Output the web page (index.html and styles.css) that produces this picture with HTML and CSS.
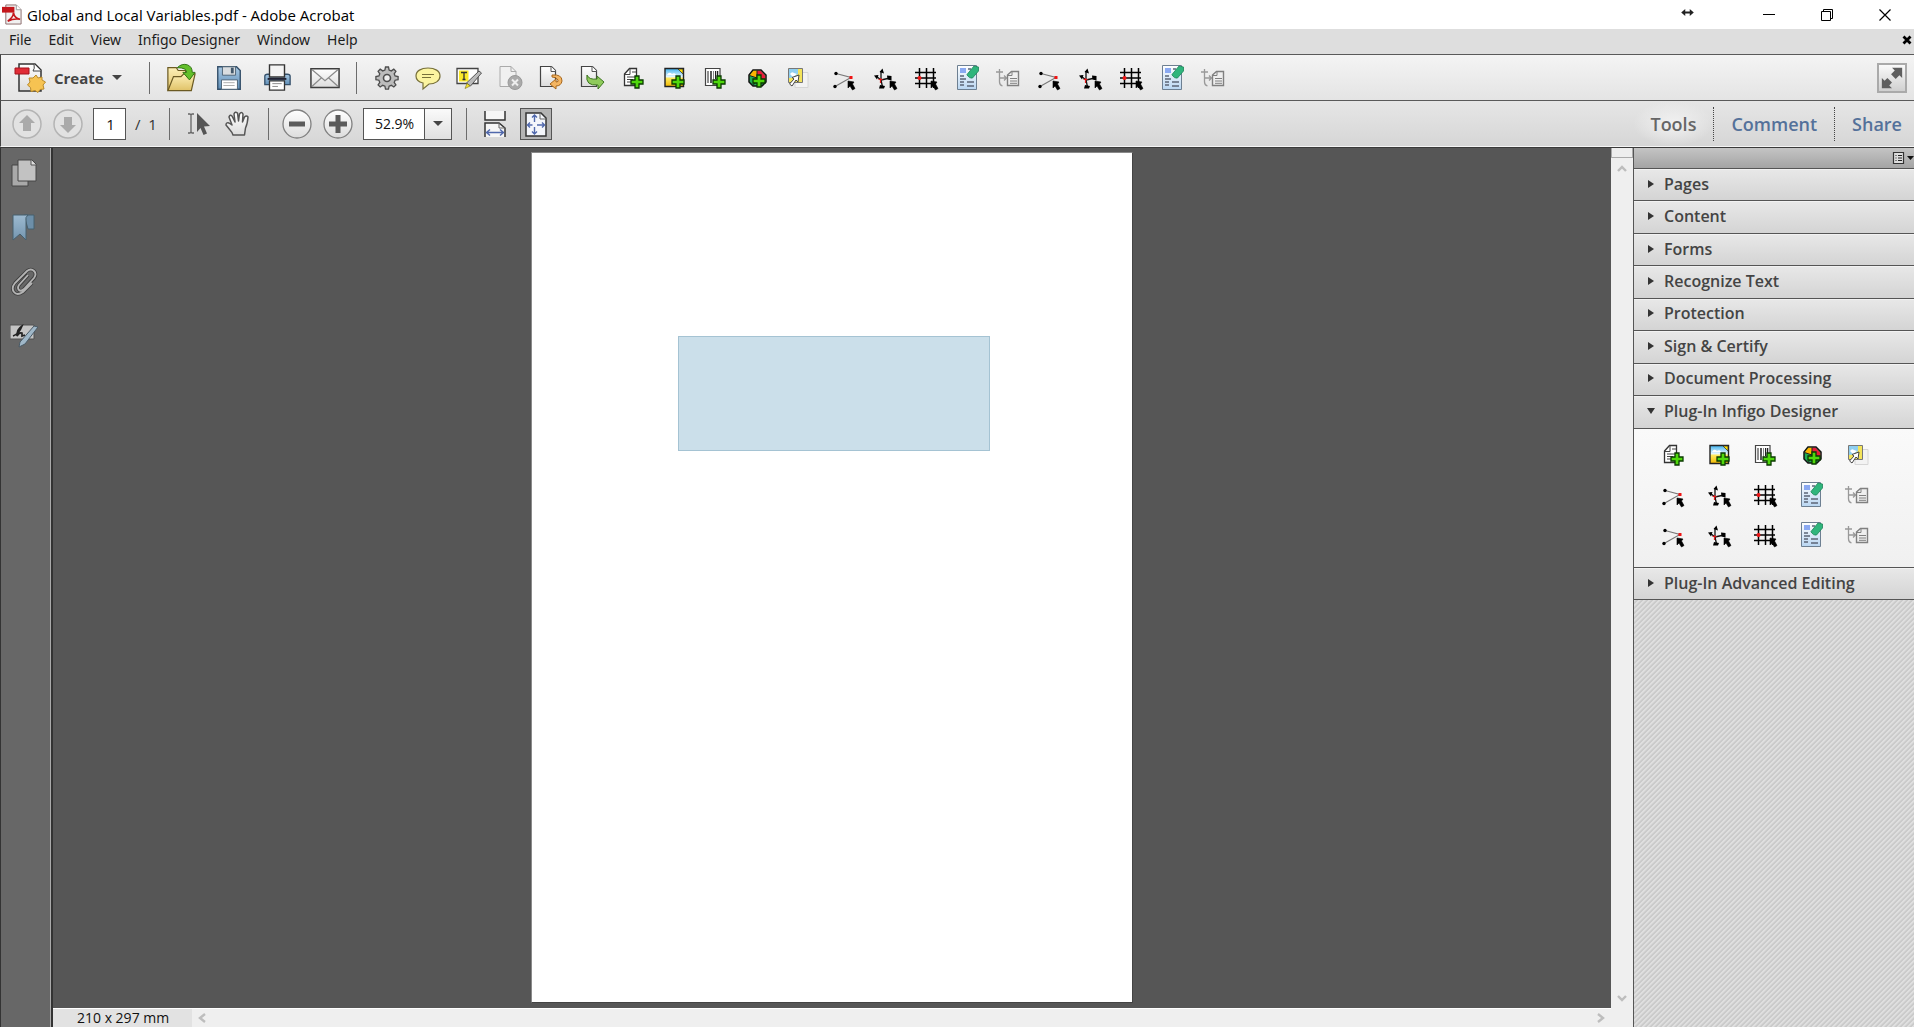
FILE: index.html
```html
<!DOCTYPE html>
<html lang="en">
<head>
<meta charset="utf-8">
<title>Global and Local Variables.pdf - Adobe Acrobat</title>
<link rel="stylesheet" href="styles.css">
</head>
<body>
<svg class="sprite" aria-hidden="true">
  <defs>
    <linearGradient id="g-paper" x1="0" y1="0" x2="0" y2="1"><stop offset="0" stop-color="#fff"/><stop offset="1" stop-color="#dcdcdc"/></linearGradient>
    <linearGradient id="g-folder" x1="0" y1="0" x2="0" y2="1"><stop offset="0" stop-color="#fdf0b8"/><stop offset="1" stop-color="#e0c267"/></linearGradient>
    <linearGradient id="g-blue" x1="0" y1="0" x2="0" y2="1"><stop offset="0" stop-color="#a9c9e4"/><stop offset="1" stop-color="#5f8fb8"/></linearGradient>
    <linearGradient id="g-form" x1="0" y1="0" x2="0" y2="1"><stop offset="0" stop-color="#fff"/><stop offset="1" stop-color="#b9d6f2"/></linearGradient>
    <linearGradient id="g-land" x1="0" y1="0" x2="0" y2="1"><stop offset="0" stop-color="#3fb2ee"/><stop offset=".45" stop-color="#e6f6ff"/><stop offset=".55" stop-color="#ffe95c"/><stop offset="1" stop-color="#f2b800"/></linearGradient>
    <linearGradient id="g-mark" x1="0" y1="0" x2="0" y2="1"><stop offset="0" stop-color="#9dbad0"/><stop offset="1" stop-color="#7496b0"/></linearGradient>
    <path id="plus" d="M-2-6h4v4h4v4h-4v4h-4v-4h-4v-4h4z" fill="#4fd80c" stroke="#0a3a00" stroke-width="1.3"/>
    <path id="cursor" d="M0 0l6 1-1.500 2 2.500 4.500-2.500 1.500-2.500-4-2 2z" fill="#000" stroke="#000" stroke-width=".6"/>
  </defs>
  <symbol id="i-text" viewBox="-1 -1 26 26">
    <path d="M3.500 8l5-5.500h7v17h-12z" fill="#fff" stroke="#333" stroke-width="1.300"/><path d="M4 8.500h5v-6" fill="none" stroke="#444"/>
    <path d="M11 6h4M6 11h9M6 13.500h6M6 16h6" stroke="#444" stroke-width="1.200"/><use href="#plus" x="16" y="16"/>
  </symbol>
  <symbol id="i-image" viewBox="-1 -1 26 26">
    <path d="M3 2.500h18.500v18H3z" fill="url(#g-land)" stroke="#222" stroke-width="1.400"/><path d="M5 9q2-4 5-1 3-2 4 1z" fill="#fff"/>
    <path d="M16 3h5v5z" fill="#ffe000" stroke="#333" stroke-width=".800"/><use href="#plus" x="16" y="16"/>
  </symbol>
  <symbol id="i-barcode" viewBox="-1 -1 26 26">
    <path d="M2.500 2.500h14.500v17H2.500z" fill="#fff" stroke="#444" stroke-width="1.200"/>
    <path d="M5 5v12M12.500 5v8" stroke="#222"/><path d="M8 5v12M14.500 5v8" stroke="#222" stroke-width="1.500"/><path d="M10.500 5v9" stroke="#888"/><use href="#plus" x="16" y="16"/>
  </symbol>
  <symbol id="i-color" viewBox="-1 -1 26 26">
    <path d="M9 4h8l5 5v7l-4 4h-9l-4-4V9z" fill="#1fae55" stroke="#111" stroke-width="1.500"/>
    <path d="M13 12V4.700H9.300L5.700 9.500z" fill="#ffb400"/><path d="M13 12V4.700h3.700l4.600 5V14z" fill="#e81c3c"/>
    <path d="M13 4.500V12L5.500 9.500M13 12l8.500 2M13 12l-4 8" fill="none" stroke="#222"/>
    <use href="#plus" x="15" y="15"/>
  </symbol>
  <symbol id="i-pick" viewBox="-1 -1 26 26">
    <path d="M10 6.500h13v15H10z" fill="#f3f3f3" stroke="#d6d6d6"/><path d="M3.500 2.500h14v14h-14z" fill="#f4e45a" stroke="#777"/>
    <path d="M4 3h9v5q-4 4-9 4z" fill="#8fcff0"/><path d="M5 8q2-3 4-1l3 1-4 3z" fill="#fff"/>
    <path d="M14 9l-1 7-2-2-4 6-2.500-2 4.500-5-2-1.500z" fill="#fff" stroke="#444"/>
  </symbol>
  <symbol id="i-line" viewBox="-1 -1 26 26">
    <path d="M4 7.500l15 4-16 9" fill="none" stroke="#777" stroke-width="1.100"/><circle cx="4" cy="7.500" r="1.700"/><circle cx="3" cy="20.500" r="1.700"/><path d="M17.500 10h3v3h-3z" fill="#f01414"/><use href="#cursor" x="16" y="15"/>
  </symbol>
  <symbol id="i-axis" viewBox="-1 -1 26 26">
    <path d="M8 14V5M8 14l-5-4M8 14l9-2M8 14l1.500 7" fill="none" stroke="#111" stroke-width="1.300"/>
    <path d="M9.500 2.500l1.500 5-4.500-1.500zM1 9.500l4.500-.5-1.500 4.500zM14 9.500l4.500.5v4.500l-4-1zM7 19l5 1-1 2.500H6z"/><path d="M5.500 13.500h4M7.500 12v5" stroke="#e01a1a" stroke-width="1.200"/><use href="#cursor" x="17" y="15"/>
  </symbol>
  <symbol id="i-grid" viewBox="-1 -1 26 26">
    <path d="M5.500 2v20M12.500 2v20M19.500 2v20M1 6.500h21M1 12h21M1 17.500h21" stroke="#000" stroke-width="1.500"/><circle cx="5.500" cy="12" r="2" fill="#f01414"/><use href="#cursor" x="17" y="15"/>
  </symbol>
  <symbol id="i-form" viewBox="-1 -1 26 26">
    <path d="M2.500 -.5h19v24h-19z" fill="url(#g-form)" stroke="#6d7f91"/><path d="M5 2h6v5H5z" fill="#8aa9f2"/>
    <path d="M5 10h4M5 13h6M5 16h4M12 16h7M5 19h4M12 20h7M13 3h3" stroke="#5c6677" stroke-width="1.500"/>
    <path d="M12 8.500l7-8.500 4.500 1v4l-6 7q-3 1-5.500-3z" fill="#2fb57c" stroke="#1c8458" stroke-width=".800"/>
  </symbol>
  <symbol id="i-tree" viewBox="-1 -1 26 26">
    <path d="M0 6h7M3.500 3v13q0 3 3 4M4 12h6M8 9.500l2.500 2.500L8 14.500" fill="none" stroke="#999" stroke-width="1.300"/>
    <path d="M11.500 9l4-3.500h7v14h-11z" fill="#efefef" stroke="#808080" stroke-width="1.400"/><path d="M12 9.500h4V6M14 12.500h7M14 15h7M14 17.300h7" fill="none" stroke="#808080"/>
  </symbol>
  <symbol id="i-gear" viewBox="-1 -1 26 26">
    <path d="M10.500 1h3l.6 3 2.200.9 2.500-1.700 2.100 2.100-1.700 2.500.9 2.200 3 .6v3l-3 .6-.9 2.200 1.700 2.500-2.100 2.100-2.500-1.700-2.200.9-.6 3h-3l-.6-3-2.200-.9-2.500 1.700-2.100-2.100 1.700-2.500-.9-2.200-3-.6v-3l3-.6.9-2.200-1.700-2.500 2.100-2.100 2.500 1.700 2.200-.9z" fill="#bcbcbc" stroke="#4d4d4d" stroke-width="1.300"/><circle cx="12" cy="12" r="3.500" fill="#eee" stroke="#4d4d4d" stroke-width="1.600"/>
  </symbol>
  <symbol id="i-note" viewBox="-1 -1 26 26">
    <path d="M12 2c7 0 12 3 12 8s-5 8-11 8l-6 5v-6c-4-1-7-3-7-7 0-5 5-8 12-8z" fill="#fbf4a0" stroke="#77703a" stroke-width="1.200"/><path d="M6 8.500h12M6 11.500h9" stroke="#77703a" stroke-width="1.200"/>
  </symbol>
  <symbol id="i-high" viewBox="-1 -1 26 26">
    <path d="M0 2.500h21v15H0z" fill="#fff" stroke="#444" stroke-width="1.300"/><path d="M2 4.500h9.500v11H2z" fill="#fbe92a"/><path d="M4 6.500h6M7 6.500v7M5.500 13.500h3" stroke="#333" stroke-width="1.300" fill="none"/>
    <path d="M22 5l2.500 2-11 13-4-3z" fill="#bbb" stroke="#555"/><path d="M10 17.500l3 2.500-5 2.500z" fill="#fbe92a" stroke="#8a7c20" stroke-width=".700"/>
  </symbol>
  <symbol id="i-del" viewBox="-1 -1 26 26">
    <path d="M2 .500h11l5 5v15H2z" fill="#f0f0f0" stroke="#aaa"/><path d="M13 .500v5h5" fill="none" stroke="#aaa"/><circle cx="17" cy="16.500" r="7" fill="#aaa" stroke="#999"/><path d="M14 13.500l6 6M20 13.500l-6 6" stroke="#eee" stroke-width="2"/>
  </symbol>
  <symbol id="i-rot" viewBox="-1 -1 26 26">
    <path d="M1.500 .500h11l4 4v16h-15z" fill="url(#g-paper)" stroke="#444" stroke-width="1.200"/><path d="M12 .500v5h5" fill="#fff" stroke="#555"/><path d="M13 9q10-1 10 6-1 5-6 5v3l-6-5 6-5v3q3 0 2-2-1-3-6-3z" fill="#f4b562" stroke="#a8661a"/>
  </symbol>
  <symbol id="i-exp" viewBox="-1 -1 26 26">
    <path d="M1.500 .500h11l4 4v16h-15z" fill="url(#g-paper)" stroke="#444" stroke-width="1.200"/><path d="M12 .500v5h5" fill="#fff" stroke="#555"/><path d="M7 9q2 5 10 4v-3l7 6-6 7v-4Q5 20 7 9z" fill="#8fcb5b" stroke="#3d7521"/>
  </symbol>
  <symbol id="i-create" viewBox="0 0 32 32">
    <path d="M5 2h16l6 6v21H5z" fill="url(#g-paper)" stroke="#333" stroke-width="1.500"/><path d="M20 2q1 5-1 7h8" fill="#fff" stroke="#444"/>
    <path d="M1 6h14v6H1z" fill="#e02c36" stroke="#a4121c"/><path d="M22 13l2 3 4-1 0 3 3.500 2-2.500 3 1 4-4 .5-2 3-3-2-4 1-.5-4-3-2.500 2.500-3-1-4 4 0z" fill="#f6c352" stroke="#b98a2a"/>
  </symbol>
  <symbol id="i-open" viewBox="0 0 32 32">
    <path d="M2 29V5h9l2 3h8v21z" fill="url(#g-folder)" stroke="#6b5a23" stroke-width="1.300"/><path d="M2 29.500l6-15h8l3-3h12l-4 18z" fill="url(#g-folder)" stroke="#6b5a23" stroke-width="1.300"/>
    <path d="M12 5q5-5 11-3 5 2 5 8h3l-6 8-7-8h4q0-5-10-5z" fill="#62bf2a" stroke="#2e7011"/>
  </symbol>
  <symbol id="i-save" viewBox="0 0 32 32">
    <path d="M4 4h20l4 4v20H4z" fill="url(#g-blue)" stroke="#35506a" stroke-width="1.500"/><path d="M9 4h14v9H9z" fill="#d9dde0" stroke="#4d6274"/><path d="M18 5h3v6h-3z" fill="#43586b"/><path d="M8 18h17v10H8z" fill="#fff" stroke="#4d6274"/><path d="M10 21h12M10 24h12" stroke="#aaa"/>
  </symbol>
  <symbol id="i-print" viewBox="0 0 32 32">
    <path d="M3 14q0-2 3-2h21q3 0 3 2v9H3z" fill="url(#g-blue)" stroke="#35506a" stroke-width="1.400"/><path d="M8 2h16v13H8z" fill="#f4f4f4" stroke="#333" stroke-width="1.500"/><path d="M6 17h20" stroke="#223" stroke-width="2"/><path d="M8 19h16v10H8z" fill="#fff" stroke="#333" stroke-width="1.400"/><path d="M11 22h10M11 25h6" stroke="#888"/>
  </symbol>
  <symbol id="i-mail" viewBox="0 0 32 32">
    <path d="M1 6h30v20H1z" fill="url(#g-paper)" stroke="#3e3e3e" stroke-width="1.600"/><path d="M2 7l14 12L30 7M2 25l10-9M30 25l-10-9" fill="none" stroke="#8a8a8a" stroke-width="1.300"/>
  </symbol>
  <symbol id="i-up" viewBox="0 0 32 32"><circle cx="16" cy="16" r="14" fill="#e2e2e2" stroke="#b4b4b4" stroke-width="1.500"/><path d="M16 7l8 8h-4v8h-8v-8H8z" fill="#aaa"/></symbol>
  <symbol id="i-down" viewBox="0 0 32 32"><circle cx="16" cy="16" r="14" fill="#e2e2e2" stroke="#b4b4b4" stroke-width="1.500"/><path d="M16 25l8-8h-4V9h-8v8H8z" fill="#aaa"/></symbol>
  <symbol id="i-minus" viewBox="0 0 32 32"><circle cx="16" cy="16" r="14" fill="url(#g-paper)" stroke="#808080" stroke-width="1.300"/><path d="M8 13.500h16v5H8z" fill="#5b5b5b"/></symbol>
  <symbol id="i-plus" viewBox="0 0 32 32"><circle cx="16" cy="16" r="14" fill="url(#g-paper)" stroke="#808080" stroke-width="1.300"/><path d="M13.500 7h5v6.500H25v5h-6.500V25h-5v-6.500H7v-5h6.500z" fill="#5b5b5b"/></symbol>
  <symbol id="i-select" viewBox="0 0 26 26"><path d="M1 3h2l1 1 1-1h2M1 22h2l1-1 1 1h2M4 4v17" fill="none" stroke="#666" stroke-width="1.300"/><path d="M10 2l13 13-6 .5 3 7-3.500 1.500-3-7-3.500 4z" fill="#555"/></symbol>
  <symbol id="i-hand" viewBox="0 0 26 26"><path d="M8 24q-1-3-3-5L1 14q0-3 3-2l3 2L4 6q1-3 3-1l3 6-1-8q1-3 3.500-1l1 8 1-7q2-3 3.500 0l-.5 8 2-5q2-2 3.500 0-.5 7-2.500 11l-1 7z" fill="url(#g-paper)" stroke="#555" stroke-width="1.500" stroke-linejoin="round"/></symbol>
  <symbol id="i-fitw" viewBox="0 0 26 26"><path d="M3 0v9h20V0" fill="#f6f6f6" stroke="#333" stroke-width="1.500"/><path d="M3 26V12h14l6 5v9" fill="#f6f6f6" stroke="#333" stroke-width="1.500"/><path d="M17 12v5h6" fill="none" stroke="#666"/><path d="M5 21.500h16M8 18.500l-3.500 3L8 24.500M18 18.500l3.500 3-3.500 3" fill="none" stroke="#5068ac" stroke-width="1.400"/></symbol>
  <symbol id="i-fitp" viewBox="0 0 26 26"><path d="M3 2h15l5 5v18H3z" fill="#f4f6fb" stroke="#333" stroke-width="1.500"/><path d="M17 2v6h6" fill="none" stroke="#666"/><path d="M11.500 4v7M9 6.500L11.500 4 14 6.500M11.500 16v7M9 20.500l2.500 2.500 2.500-2.500M4.500 14h5M7 11.500L4.500 14 7 16.500M14 14h7M19 11.500l2.500 2.500-2.500 2.500" fill="none" stroke="#5068ac" stroke-width="1.400"/></symbol>
  <symbol id="i-pages" viewBox="0 0 28 32"><path d="M2 8h16v21H2z" fill="#a9a9a9" stroke="#474747"/><path d="M8 3h14l4 4v17H8z" fill="#c2c2c2" stroke="#474747"/><path d="M21 3v5h5" fill="#ddd" stroke="#555"/></symbol>
  <symbol id="i-bookmark" viewBox="0 0 28 32"><path d="M14 4h10v14h-6z" fill="#6d8fa9" stroke="#46606f"/><path d="M3 4h15q-3 2-2 6v19l-6-6-7 6z" fill="url(#g-mark)" stroke="#46606f"/></symbol>
  <symbol id="i-clip" viewBox="0 0 28 32"><path d="M18 10l-9 10q-2 3 0 5t5-1l10-11q3-4 0-7t-7 0L5 18q-4 5-1 9t9 0l9-9" fill="none" stroke="#3f3f3f" stroke-width="3.600"/><path d="M18 10l-9 10q-2 3 0 5t5-1l10-11q3-4 0-7t-7 0L5 18q-4 5-1 9t9 0l9-9" fill="none" stroke="#b4b4b4" stroke-width="1.800"/></symbol>
  <symbol id="i-sign" viewBox="0 0 28 32"><path d="M0 6h24v14H0z" fill="#c4c4c4" stroke="#505050"/><path d="M3 17q6-2 9-10-5 3-5 10 2-4 5-3v3l3-1" fill="none" stroke="#222" stroke-width="1.700"/><path d="M24 7l4 1-13 17-6 3 1-5z" fill="#9fb7c8" stroke="#4a5a66"/></symbol>
  <symbol id="i-pdf" viewBox="0 0 22 22"><path d="M4 1h11l5 5v15H4z" fill="#f1f1f1" stroke="#8b6b6b"/><path d="M15 1v5h5" fill="#fff" stroke="#999"/><path d="M0 3h13v6H0z" fill="#c4161c"/><path d="M6 18q6-4 6-9 1 6 7 7-7-1-13 2z" fill="none" stroke="#c4161c" stroke-width="1.700"/></symbol>
</svg>

<div class="window">
  <header class="titlebar">
    <svg class="app-icon"><use href="#i-pdf"/></svg>
    <h1 class="title">Global and Local Variables.pdf - Adobe Acrobat</h1>
    <div class="window-controls">
      <svg class="drag-mark" viewBox="0 0 14 10"><path d="M0 5l4.500-4v3h5V1L14 5 9.500 9V6h-5v3z" fill="#222"/></svg>
      <button type="button" aria-label="Minimize"><svg viewBox="0 0 14 14"><path d="M1 6.500h12" stroke="#000"/></svg></button>
      <button type="button" aria-label="Restore"><svg viewBox="0 0 14 14"><path d="M1.500 3.500h9v9h-9zM3.500 3.500v-2h9v9h-2" fill="none" stroke="#000"/></svg></button>
      <button type="button" aria-label="Close"><svg viewBox="0 0 14 14"><path d="M1.500 1.500l11 11M12.500 1.500l-11 11" stroke="#000" stroke-width="1.200"/></svg></button>
    </div>
  </header>

  <nav class="menubar" aria-label="Menu">
    <button type="button">File</button>
    <button type="button">Edit</button>
    <button type="button">View</button>
    <button type="button">Infigo Designer</button>
    <button type="button">Window</button>
    <button type="button">Help</button>
    <button type="button" class="close-doc" aria-label="Close document"><svg viewBox="0 0 10 10"><path d="M1.500 1.500l7 7M8.500 1.500l-7 7" stroke="#000" stroke-width="2.800"/></svg></button>
  </nav>

  <div class="toolbar">
    <button type="button" class="create"><svg><use href="#i-create"/></svg>Create<span class="caret"></span></button>
    <span class="sep"></span>
    <div class="file-tools">
      <button type="button" aria-label="Open"><svg><use href="#i-open"/></svg></button>
      <button type="button" aria-label="Save"><svg><use href="#i-save"/></svg></button>
      <button type="button" aria-label="Print"><svg><use href="#i-print"/></svg></button>
      <button type="button" aria-label="Email"><svg><use href="#i-mail"/></svg></button>
    </div>
    <span class="sep"></span>
    <div class="quick-tools">
      <button type="button" aria-label="Preferences"><svg><use href="#i-gear"/></svg></button>
      <button type="button" aria-label="Sticky note"><svg><use href="#i-note"/></svg></button>
      <button type="button" aria-label="Highlight text"><svg><use href="#i-high"/></svg></button>
      <button type="button" aria-label="Delete pages" disabled><svg><use href="#i-del"/></svg></button>
      <button type="button" aria-label="Rotate pages"><svg><use href="#i-rot"/></svg></button>
      <button type="button" aria-label="Export"><svg><use href="#i-exp"/></svg></button>
      <button type="button" aria-label="Add text"><svg><use href="#i-text"/></svg></button>
      <button type="button" aria-label="Add image"><svg><use href="#i-image"/></svg></button>
      <button type="button" aria-label="Add barcode"><svg><use href="#i-barcode"/></svg></button>
      <button type="button" aria-label="Add graphic"><svg><use href="#i-color"/></svg></button>
      <button type="button" aria-label="Select field"><svg><use href="#i-pick"/></svg></button>
    </div>
    <div class="quick-tools">
      <button type="button" aria-label="Line path"><svg><use href="#i-line"/></svg></button>
      <button type="button" aria-label="Anchor"><svg><use href="#i-axis"/></svg></button>
      <button type="button" aria-label="Grid"><svg><use href="#i-grid"/></svg></button>
      <button type="button" aria-label="Form"><svg><use href="#i-form"/></svg></button>
      <button type="button" aria-label="Text flow" disabled><svg><use href="#i-tree"/></svg></button>
      <button type="button" aria-label="Line path 2"><svg><use href="#i-line"/></svg></button>
      <button type="button" aria-label="Anchor 2"><svg><use href="#i-axis"/></svg></button>
      <button type="button" aria-label="Grid 2"><svg><use href="#i-grid"/></svg></button>
      <button type="button" aria-label="Form 2"><svg><use href="#i-form"/></svg></button>
      <button type="button" aria-label="Text flow 2" disabled><svg><use href="#i-tree"/></svg></button>
    </div>
    <button type="button" class="expand" aria-label="Read mode"><svg viewBox="0 0 26 26"><path d="M24 2v11l-3-3-4 4-5-5 4-4-3-3zM2 24V13l3 3 3-3 5 5-3 3 3 3z" fill="#5f5f5f"/></svg></button>
  </div>

  <div class="navbar">
    <div class="page-nav">
      <button type="button" aria-label="Previous page" disabled><svg><use href="#i-up"/></svg></button>
      <button type="button" aria-label="Next page" disabled><svg><use href="#i-down"/></svg></button>
      <input class="page-input" aria-label="Page number" value="1">
      <span class="page-count">/&nbsp; 1</span>
    </div>
    <span class="sep"></span>
    <div class="cursor-tools">
      <button type="button" aria-label="Select tool"><svg><use href="#i-select"/></svg></button>
      <button type="button" aria-label="Hand tool"><svg><use href="#i-hand"/></svg></button>
    </div>
    <span class="sep"></span>
    <div class="zoom-tools">
      <button type="button" aria-label="Zoom out"><svg><use href="#i-minus"/></svg></button>
      <button type="button" aria-label="Zoom in"><svg><use href="#i-plus"/></svg></button>
      <div class="zoom-box"><input aria-label="Zoom level" value="52.9%"><button type="button" aria-label="Zoom presets"><span class="caret"></span></button></div>
    </div>
    <span class="sep"></span>
    <div class="fit-tools">
      <button type="button" aria-label="Fit width"><svg><use href="#i-fitw"/></svg></button>
      <button type="button" class="pressed" aria-label="Fit page"><svg><use href="#i-fitp"/></svg></button>
    </div>
    <div class="pane-tabs">
      <button type="button" class="active">Tools</button>
      <button type="button">Comment</button>
      <button type="button">Share</button>
    </div>
  </div>

  <main class="workspace">
    <nav class="rail" aria-label="Navigation panes">
      <button type="button" aria-label="Page thumbnails"><svg><use href="#i-pages"/></svg></button>
      <button type="button" aria-label="Bookmarks"><svg><use href="#i-bookmark"/></svg></button>
      <button type="button" aria-label="Attachments"><svg><use href="#i-clip"/></svg></button>
      <button type="button" aria-label="Signatures"><svg><use href="#i-sign"/></svg></button>
    </nav>

    <div class="viewer">
      <div class="canvas"><div class="sheet"><div class="field"></div></div></div>
      <div class="v-scroll">
        <span class="splitter"></span>
        <button type="button" aria-label="Scroll up"><svg viewBox="0 0 12 12"><path d="M2 9l4-4 4 4" fill="none" stroke="#bdbdbd" stroke-width="2.400"/></svg></button>
        <button type="button" class="end" aria-label="Scroll down"><svg viewBox="0 0 12 12"><path d="M2 4l4 4 4-4" fill="none" stroke="#bdbdbd" stroke-width="2.400"/></svg></button>
      </div>
      <div class="h-scroll">
        <span class="page-size">210 x 297 mm</span>
        <button type="button" aria-label="Scroll left"><svg viewBox="0 0 12 12"><path d="M9 2L4 6l5 4" fill="none" stroke="#bdbdbd" stroke-width="2.400"/></svg></button>
        <button type="button" class="end" aria-label="Scroll right"><svg viewBox="0 0 12 12"><path d="M3 2l5 4-5 4" fill="none" stroke="#bdbdbd" stroke-width="2.400"/></svg></button>
      </div>
    </div>

    <aside class="panel" aria-label="Tools">
      <div class="panel-top"><button type="button" aria-label="Panel options"><svg viewBox="0 0 22 14"><path d="M1.500 1.500h10v11h-10z" fill="#ddd" stroke="#333" stroke-width="1.200"/><path d="M3.500 4.500h1M6 4.500h4M3.500 7h1M6 7h4M3.500 9.500h1M6 9.500h4" stroke="#222"/><path d="M15 5h7l-3.500 4z" fill="#111"/></svg></button></div>
      <div class="sections">
        <button type="button" class="section">Pages</button>
        <button type="button" class="section">Content</button>
        <button type="button" class="section">Forms</button>
        <button type="button" class="section">Recognize Text</button>
        <button type="button" class="section">Protection</button>
        <button type="button" class="section">Sign &amp; Certify</button>
        <button type="button" class="section">Document Processing</button>
      </div>
      <button type="button" class="section open" aria-expanded="true">Plug-In Infigo Designer</button>
      <div class="tool-grid">
        <button type="button" aria-label="Add text"><svg><use href="#i-text"/></svg></button>
        <button type="button" aria-label="Add image"><svg><use href="#i-image"/></svg></button>
        <button type="button" aria-label="Add barcode"><svg><use href="#i-barcode"/></svg></button>
        <button type="button" aria-label="Add graphic"><svg><use href="#i-color"/></svg></button>
        <button type="button" aria-label="Select field"><svg><use href="#i-pick"/></svg></button>
        <button type="button" aria-label="Line path"><svg><use href="#i-line"/></svg></button>
        <button type="button" aria-label="Anchor"><svg><use href="#i-axis"/></svg></button>
        <button type="button" aria-label="Grid"><svg><use href="#i-grid"/></svg></button>
        <button type="button" aria-label="Form"><svg><use href="#i-form"/></svg></button>
        <button type="button" aria-label="Text flow" disabled><svg><use href="#i-tree"/></svg></button>
        <button type="button" aria-label="Line path 2"><svg><use href="#i-line"/></svg></button>
        <button type="button" aria-label="Anchor 2"><svg><use href="#i-axis"/></svg></button>
        <button type="button" aria-label="Grid 2"><svg><use href="#i-grid"/></svg></button>
        <button type="button" aria-label="Form 2"><svg><use href="#i-form"/></svg></button>
        <button type="button" aria-label="Text flow 2" disabled><svg><use href="#i-tree"/></svg></button>
      </div>
      <button type="button" class="section">Plug-In Advanced Editing</button>
      <div class="hatch"></div>
    </aside>
  </main>
</div>
</body>
</html>
```
FILE: styles.css
```css
* { box-sizing: border-box; }

body {
  margin: 0;
  font-family: "Open Sans", "Noto Sans", sans-serif;
  font-size: 14px;
  color: #111;
}

button, input { font: inherit; color: inherit; margin: 0; padding: 0; border: 0; border-radius: 0; }
button { background: none; display: flex; align-items: center; justify-content: center; white-space: nowrap; }
svg { display: block; flex: none; }
.sprite { position: absolute; width: 0; height: 0; }

.window { display: flex; flex-direction: column; height: 100vh; overflow: hidden; }

/* Title bar */
.titlebar { display: flex; align-items: center; height: 29px; padding-left: 2px; background: #fff; flex: none; }
.app-icon { width: 21px; height: 21px; margin-right: 4px; }
.title { margin: 0; font-size: 15px; font-weight: 400; line-height: 20px; color: #000; }
.window-controls { display: flex; align-items: center; margin-left: auto; }
.window-controls button { width: 58px; height: 28px; }
.window-controls button svg { width: 14px; height: 14px; }
.window-controls .drag-mark { width: 13px; height: 9px; margin: 0 46px 5px 0; }

/* Menu bar */
.menubar { display: flex; align-items: center; gap: 17px; height: 25px; padding: 0 2px 3px 9px; background: #dedede; flex: none; }
.menubar button { line-height: 20px; font-family: "Noto Sans", sans-serif; font-size: 14px; color: #1c1c1c; }
.menubar .close-doc { margin-left: auto; }
.close-doc svg { width: 10px; height: 10px; }

/* Toolbars */
.toolbar, .navbar {
  display: flex;
  align-items: center;
  height: 46px;
  border-top: 1px solid #5a5a5a;
  border-left: 1px solid #444;
  flex: none;
}
.toolbar { background: linear-gradient(#f4f4f4, #e4e4e4); }
.navbar { height: 47px; background: linear-gradient(#e6e6e6, #d6d6d6); border-bottom: 1px solid #f4f4f4; }
.sep { width: 1px; height: 32px; background: #6c6c6c; flex: none; }
.caret { border: 5px solid transparent; border-top-color: #444; border-bottom: 0; }

.create { margin: 0 27px 0 13px; gap: 8px; font-size: 15px; font-weight: 700; color: #444; }
.create svg { width: 32px; height: 32px; }
.file-tools { display: flex; margin: 0 7px; }
.file-tools button { width: 48px; height: 40px; }
.file-tools svg { width: 30px; height: 30px; }
.quick-tools { display: flex; }
.quick-tools button { width: 41px; height: 40px; }
.quick-tools svg, .tool-grid svg { width: 26px; height: 26px; }
.sep + .quick-tools { margin-left: 10px; }
.quick-tools + .quick-tools { margin-left: 6px; }
.expand { width: 30px; height: 30px; margin: 0 7px 0 auto; background: linear-gradient(#fafafa, #d0d0d0); border: 2px solid #aaa; }
.expand svg { width: 24px; height: 24px; }

.page-nav, .cursor-tools, .zoom-tools, .fit-tools { display: flex; align-items: center; }
.page-nav svg, .zoom-tools svg { width: 32px; height: 32px; }
.page-nav { gap: 9px; padding: 0 12px 0 10px; }
.page-input { width: 33px; height: 32px; border: 1px solid #555; background: #fff; padding-left: 2px; text-align: center; font-size: 15px; }
.page-count { font-size: 15px; color: #333; }
.cursor-tools { gap: 12px; padding: 0 17px; }
.cursor-tools svg, .fit-tools svg { width: 26px; height: 26px; }
.zoom-tools { gap: 9px; padding: 0 14px 0 12px; }
.zoom-box { display: flex; height: 32px; width: 89px; border: 1px solid #555; }
.zoom-box input { width: 61px; padding-left: 11px; border-right: 1px solid #555; background: #fff; font-size: 14px; }
.zoom-box button { flex: 1; background: linear-gradient(#fafafa, #e0e0e0); }
.fit-tools { gap: 12px; padding-left: 15px; }
.fit-tools .pressed { width: 32px; height: 32px; border: 1px solid #555; background: #b4b4b4; }

.pane-tabs { display: flex; align-items: center; margin-left: auto; align-self: stretch; font-size: 18px; font-weight: 600; color: #54719a; }
.pane-tabs button { height: 34px; padding: 0 17px; border-left: 1px dotted #444; }
.pane-tabs .active { align-self: stretch; height: auto; border-left: 0; color: #666; background: radial-gradient(closest-side, #f2f2f2, transparent); }
.pane-tabs button:last-child { padding-right: 12px; }

/* Workspace */
.workspace { flex: 1; min-height: 0; display: flex; background: #565656; border-top: 1px solid #3a3a3a; }
.rail {
  width: 53px;
  padding: 9px 0 0 7px;
  display: flex;
  flex-direction: column;
  gap: 22px;
  background: #676767;
  border-left: 1px solid #333;
  border-right: 2px solid #333;
  box-shadow: inset -1px 0 #aaa;
  flex: none;
}
.rail button { width: 32px; height: 32px; }
.rail svg { width: 28px; height: 32px; }

.viewer { flex: 1; min-width: 0; display: grid; grid-template: 1fr 19px / 1fr 22px; }
.canvas { display: flex; justify-content: center; padding: 4px 0 5px; min-height: 0; }
.sheet { position: relative; height: 100%; aspect-ratio: 210 / 297; background: #fff; border: 1px solid #999; border-color: #8a8a8a #444 #444 #8a8a8a; }
.field { position: absolute; left: 24.3%; top: 21.6%; width: 52%; height: 13.5%; background: #cbdfea; border: 1px solid #a5c3d3; }

.v-scroll { grid-row: 1 / 3; grid-column: 2; display: flex; flex-direction: column; align-items: center; background: #efefef; }
.splitter { width: 100%; height: 10px; border: 1px solid #aaa; border-top: 0; background: #eee; }
.v-scroll svg, .h-scroll svg { width: 12px; height: 12px; }
.v-scroll button { margin-top: 4px; }
.v-scroll .end { margin: auto 0 23px; }
.h-scroll { display: flex; align-items: center; background: #efefef; border-top: 1px solid #fff; }
.page-size { width: 139px; padding-left: 24px; line-height: 18px; background: #e2e2e2; white-space: nowrap; }
.h-scroll button { margin: 0 4px; }
.h-scroll .end { margin-left: auto; }

/* Tools panel */
.panel { width: 281px; display: flex; flex-direction: column; border-left: 1px solid #555; flex: none; }
.panel-top { display: flex; justify-content: flex-end; align-items: center; height: 20px; background: linear-gradient(#c4c4c4, #a4a4a4); flex: none; }
.panel-top svg { width: 22px; height: 14px; }
.sections { display: grid; grid-auto-rows: 1fr; height: 227px; flex: none; }
.section {
  justify-content: flex-start;
  gap: 10px;
  min-height: 32px;
  padding: 0 0 2px 14px;
  font-size: 16px;
  line-height: 20px;
  font-weight: 600;
  color: #444;
  background: linear-gradient(#e8e8e8, #d4d4d4);
  border-top: 1px solid #555;
  box-shadow: inset 0 1px #f2f2f2;
  flex: none;
}
.section::before { content: ""; border: 4px solid transparent; border-left: 6px solid #333; border-right: 0; }
.section.open::before { margin: 0 -1px; border: 4px solid transparent; border-top: 6px solid #333; border-bottom: 0; }
.section.open { height: 33px; }
.tool-grid {
  display: grid;
  grid-template-columns: repeat(5, 46px);
  grid-auto-rows: 40px;
  padding: 6px 0 12px 16px;
  background: linear-gradient(#fafafa, #f0f0f0);
  border-top: 1px solid #555;
}
.hatch {
  flex: 1;
  border-top: 1px solid #555;
  background: linear-gradient(135deg, #dfdfdf 0 15%, #cbcbcb 25% 40%, #dfdfdf 50% 65%, #cbcbcb 75% 90%, #dfdfdf) 0 0 / 5px 5px;
}
```
